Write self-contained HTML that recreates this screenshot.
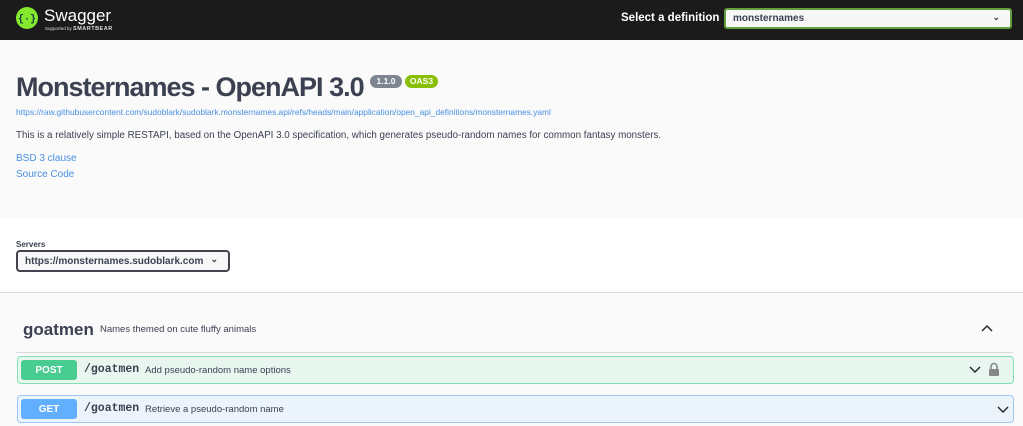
<!DOCTYPE html>
<html><head><style>
*{box-sizing:border-box;margin:0;padding:0}
body{width:1023px;height:426px;overflow:hidden;font-family:"Liberation Sans",sans-serif;background:#fafafa;position:relative;color:#3b4151}
.a{position:absolute}
.hdr{left:0;top:0;width:1023px;height:40px;background:#1b1b1b}
.link{color:#4990e2}
.op{position:absolute;left:17px;width:997px;height:28px;border-radius:4px;border:1px solid}
.m{position:absolute;left:3px;top:3px;width:56px;height:20px;border-radius:3px;color:#fff;font-weight:bold;font-size:10px;text-align:center;line-height:21px}
.p{position:absolute;left:66px;top:6px;font-family:"Liberation Mono",monospace;font-weight:bold;font-size:11.5px}
.d{position:absolute;left:127px;top:8px;font-size:9.5px}
</style></head><body>
<div class="a hdr"></div>
<svg class="a" style="left:16px;top:7px" width="22" height="22" viewBox="0 0 22 22"><circle cx="11" cy="11" r="11" fill="#85ea2d"/><text x="11" y="14.5" font-size="10" text-anchor="middle" fill="#173647" font-family="Liberation Mono" font-weight="bold">{·}</text></svg>
<div class="a" style="left:44px;top:6px;color:#fff;font-size:17px">Swagger<span style="font-size:5px">.</span></div>
<div class="a" style="left:45px;top:26px;color:#ddd;font-size:4.5px">Supported by <b style="font-size:5.5px;letter-spacing:.5px">SMARTBEAR</b></div>
<div class="a" style="left:621px;top:12px;color:#fff;font-weight:bold;font-size:11.5px">Select a definition</div>
<div class="a" style="left:724px;top:8px;width:288px;height:21px;border:2px solid #62a03f;border-radius:3px;background:#f7f7f7;font-size:10px;font-weight:bold;padding:3px 7px;color:#3b4151">monsternames<span style="position:absolute;right:10px;top:2px;font-size:9px">⌄</span></div>

<div class="a" style="left:16px;top:72px;font-size:27px;letter-spacing:-1px;font-weight:bold;color:#3b4151">Monsternames - OpenAPI 3.0</div>
<div class="a" style="left:370px;top:75px;width:32px;height:13px;border-radius:7px;background:#7d8492;color:#fff;font-size:8.5px;font-weight:bold;text-align:center;line-height:13px">1.1.0</div>
<div class="a" style="left:405px;top:75px;width:33px;height:13px;border-radius:7px;background:#89bf04;color:#fff;font-size:8.5px;font-weight:bold;text-align:center;line-height:13px">OAS3</div>
<div class="a link" style="left:16px;top:107px;font-size:8.4px">https://raw.githubusercontent.com/sudoblark/sudoblark.monsternames.api/refs/heads/main/application/open_api_definitions/monsternames.yaml</div>
<div class="a" style="left:16px;top:130px;font-size:9.8px">This is a relatively simple RESTAPI, based on the OpenAPI 3.0 specification, which generates pseudo-random names for common fantasy monsters.</div>
<div class="a link" style="left:16px;top:153px;font-size:10px">BSD 3 clause</div>
<div class="a link" style="left:16px;top:169px;font-size:10px">Source Code</div>

<div class="a" style="left:0;top:217px;width:1023px;height:76px;background:#fff;border-bottom:1px solid #ddd"></div>
<div class="a" style="left:16px;top:240px;font-size:8px;font-weight:bold">Servers</div>
<div class="a" style="left:16px;top:250px;width:214px;height:22px;border:2px solid #41444e;border-radius:4px;background:#f7f7f7;font-size:10px;font-weight:bold;padding:4px 7px">https://monsternames.sudoblark.com<span style="position:absolute;right:10px;top:2px;font-size:9px">⌄</span></div>

<div class="a" style="left:23px;top:320px;font-size:17px;font-weight:bold">goatmen</div>
<div class="a" style="left:100px;top:324px;font-size:9.5px">Names themed on cute fluffy animals</div>
<svg class="a" style="left:980px;top:323px" width="14" height="10"><path d="M2 8L7 3L12 8" fill="none" stroke="#222" stroke-width="1.4"/></svg>
<div class="a" style="left:16px;top:352px;width:997px;height:1px;background:#d9dadd"></div>

<div class="op" style="top:356px;background:#e8f6f0;border-color:#83e0b2">
<div class="m" style="background:#49cc90">POST</div><div class="p">/goatmen</div><div class="d">Add pseudo-random name options</div>
<svg class="a" style="left:950px;top:8px" width="14" height="10"><path d="M2 2L7 7L12 2" fill="none" stroke="#222" stroke-width="1.4"/></svg>
<svg class="a" style="left:970px;top:5px" width="12" height="14"><path d="M3 7V4.5a3 3 0 0 1 6 0V7" fill="none" stroke="#888" stroke-width="1.6"/><rect x="1" y="7" width="10" height="7" rx="1" fill="#888"/></svg>
</div>
<div class="op" style="top:395px;background:#ebf3fb;border-color:#9cc7f5">
<div class="m" style="background:#61affe">GET</div><div class="p">/goatmen</div><div class="d">Retrieve a pseudo-random name</div>
<svg class="a" style="left:978px;top:9px" width="14" height="10"><path d="M2 2L7 7L12 2" fill="none" stroke="#222" stroke-width="1.4"/></svg>
</div>
</body></html>
